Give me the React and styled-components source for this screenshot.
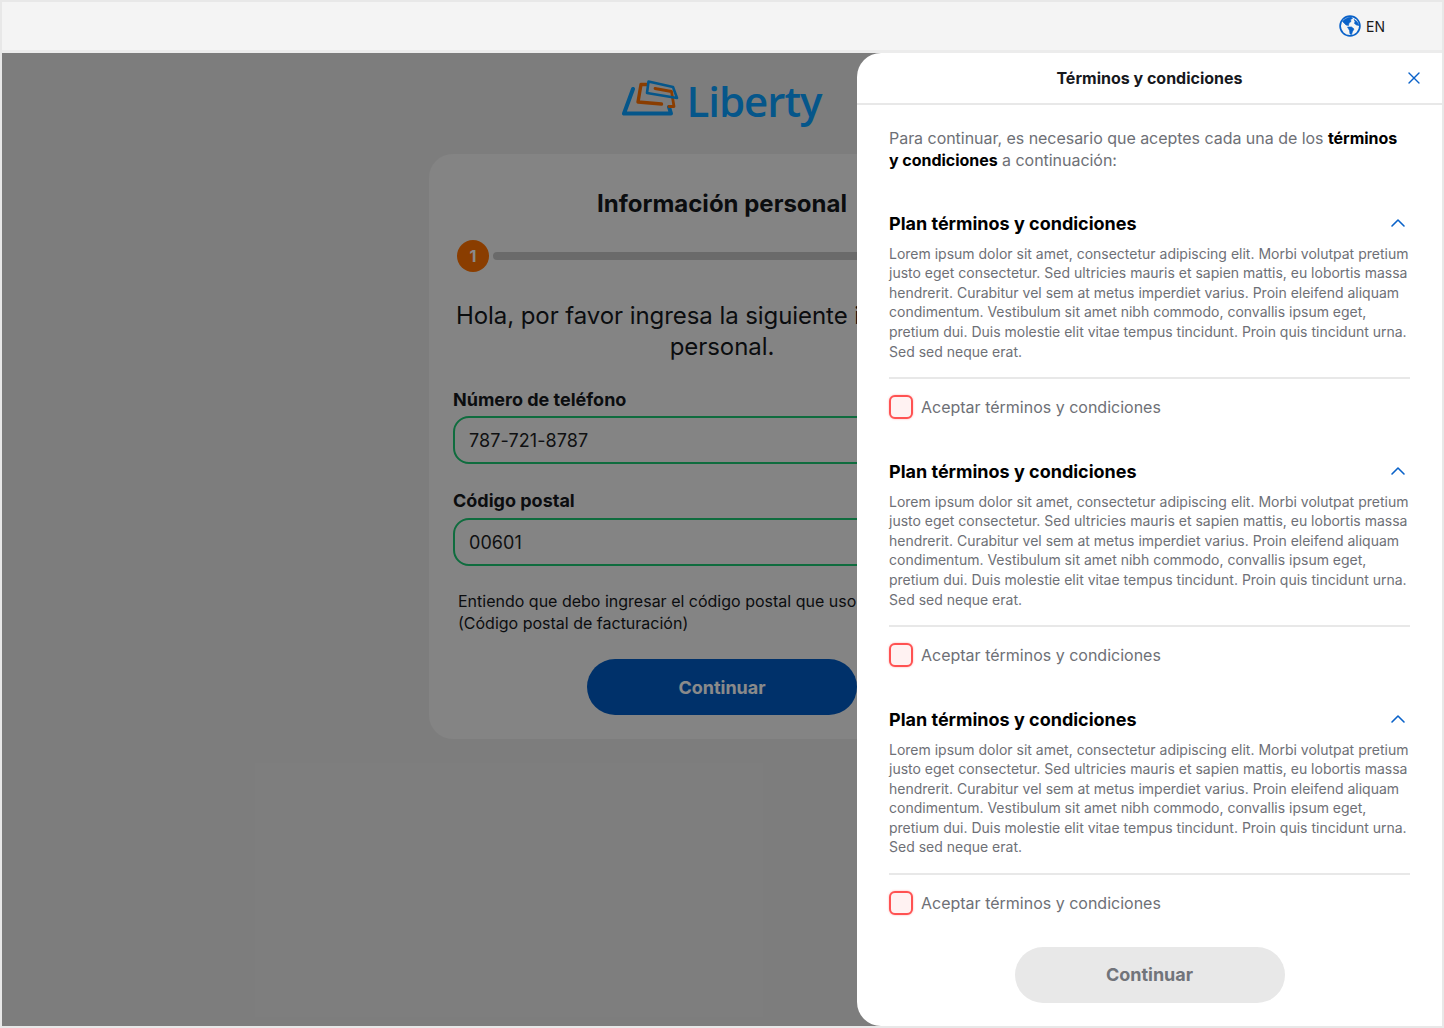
import React from "react";
import styled, { createGlobalStyle } from "styled-components";
import { X, ChevronUp } from "lucide-react";

const Global = createGlobalStyle`
  html, body { margin: 0; padding: 0; background: #e8e8e8; }
  * { box-sizing: border-box; }
  body { font-family: Inter, "Liberation Sans", sans-serif; }
`;

const Frame = styled.div`
  width: 1444px;
  height: 1028px;
  border: 2px solid #e8e8e8;
  display: flex;
  flex-direction: column;
  overflow: hidden;
`;
const TopBar = styled.header`
  height: 51px;
  flex: none;
  background: #f4f4f4;
  border-bottom: 3px solid #ececec;
  display: flex;
  align-items: center;
  justify-content: flex-end;
  gap: 5px;
  padding: 0 57px 0 0;
`;
const LangText = styled.span`
  font-size: 14px;
  color: #1a1a1a;
`;
const Main = styled.main`
  position: relative;
  flex: 1;
  background: #e8e8e8;
  display: flex;
  flex-direction: column;
  align-items: center;
  overflow: hidden;
`;
const LogoRow = styled.div`
  height: 101px;
  display: flex;
  align-items: flex-start;
  gap: 7px;
  padding-top: 27px;
  flex: none;
`;
const LogoWord = styled.span`
  font-family: "Open Sans", Lato, sans-serif;
  font-size: 42px;
  font-weight: 600;
  line-height: 48px;
  letter-spacing: -1px;
  color: #0aa0ff;
  margin-top: -3px;
`;
const Card = styled.section`
  width: 586px;
  height: 585px;
  background: #f4f4f4;
  border-radius: 24px;
  padding: 32px 24px 24px;
  flex: none;
`;
const CardTitle = styled.h1`
  margin: 0;
  font-size: 24px;
  line-height: 36px;
  font-weight: 700;
  color: #16181d;
  text-align: center;
`;
const Progress = styled.div`
  display: flex;
  align-items: center;
  gap: 4px;
  margin: 18px 0 0 4px;
`;
const StepDot = styled.div`
  width: 32px;
  height: 32px;
  border-radius: 50%;
  background: #ff7200;
  color: #fff;
  font-size: 16px;
  font-weight: 700;
  display: flex;
  align-items: center;
  justify-content: center;
`;
const Track = styled.div`
  flex: 1;
  height: 8px;
  border-radius: 4px;
  background: #c4c4c4;
`;
const Lead = styled.p`
  margin: 28px 0 0;
  font-size: 24px;
  line-height: 31px;
  letter-spacing: -0.07px;
  text-align: center;
  color: #16181d;
`;
const FieldLabel = styled.label`
  display: block;
  margin-top: ${(p) => p.$top}px;
  margin-bottom: ${(p) => p.$after}px;
  font-size: 18px;
  line-height: 26px;
  font-weight: 700;
  color: #16181d;
`;
const InputBox = styled.div`
  height: 48px;
  border: 2px solid #1cc873;
  border-radius: 16px;
  background: #f4f4f4;
  display: flex;
  align-items: center;
  padding: 0 14px;
  font-size: 18px;
  letter-spacing: 0.08px;
  color: #1c1e24;
`;
const Note = styled.p`
  margin: 24px 0 0 5px;
  font-size: 16px;
  line-height: 22px;
  color: #16181d;
`;
const PrimaryButton = styled.button`
  display: block;
  width: 270px;
  height: 56px;
  margin: 25px auto 0;
  border: none;
  border-radius: 28px;
  background: ${(p) => (p.$disabled ? "#e8e8e8" : "#005cc4")};
  color: ${(p) => (p.$disabled ? "#71747a" : "#fff")};
  font-family: inherit;
  font-size: 18px;
  font-weight: 700;
  flex: none;
`;
const Overlay = styled.div`
  position: absolute;
  inset: 0;
  background: rgba(0, 0, 0, 0.46);
`;
const Drawer = styled.aside`
  position: absolute;
  top: 0;
  right: 0;
  bottom: 0;
  width: 585px;
  background: #fff;
  border-radius: 24px 0 0 24px;
  display: flex;
  flex-direction: column;
`;
const DrawerHeader = styled.div`
  position: relative;
  height: 52px;
  flex: none;
  border-bottom: 2px solid #e8e8e8;
  display: flex;
  align-items: center;
  justify-content: center;
  font-size: 16px;
  font-weight: 700;
  color: #16181d;
`;
const CloseIcon = styled(X)`
  position: absolute;
  right: 18px;
  top: 15px;
  color: #0a62c9;
`;
const DrawerBody = styled.div`
  flex: 1;
  padding: 22px 32px 0;
  display: flex;
  flex-direction: column;
`;
const Intro = styled.p`
  margin: 0;
  font-size: 16px;
  line-height: 22px;
  letter-spacing: -0.035px;
  color: #6e7076;
  b { color: #000; font-weight: 700; }
`;
const Section = styled.div`
  margin-top: ${(p) => p.$top}px;
`;
const SectionHead = styled.div`
  display: flex;
  align-items: center;
  justify-content: space-between;
  height: 24px;
  h2 { margin: 0; font-size: 18px; line-height: 24px; font-weight: 700; color: #000; }
`;
const Chevron = styled(ChevronUp)`
  color: #0a62c9;
  margin-bottom: 2px;
`;
const Lorem = styled.p`
  margin: 7.6px 0 0;
  font-size: 14px;
  line-height: 19.6px;
  color: #6e7076;
`;
const Rule = styled.hr`
  margin: 15.8px 0 0;
  border: none;
  height: 2px;
  background: #e8e8e8;
`;
const CheckRow = styled.div`
  display: flex;
  align-items: center;
  gap: 8px;
  margin-top: 16px;
  font-size: 16px;
  line-height: 24px;
  color: #6e7076;
`;
const CheckBox = styled.span`
  width: 24px;
  height: 24px;
  border: 2px solid #ff5252;
  border-radius: 6px;
  background: #fff2f2;
  box-shadow: 0 0 2px rgba(255, 82, 82, 0.5);
  flex: none;
`;
const FooterButton = styled(PrimaryButton)`
  margin: 32px auto 0;
`;

const LOREM =
  "Lorem ipsum dolor sit amet, consectetur adipiscing elit. Morbi volutpat pretium justo eget consectetur. Sed ultricies mauris et sapien mattis, eu lobortis massa hendrerit. Curabitur vel sem at metus imperdiet varius. Proin eleifend aliquam condimentum. Vestibulum sit amet nibh commodo, convallis ipsum eget, pretium dui. Duis molestie elit vitae tempus tincidunt. Proin quis tincidunt urna. Sed sed neque erat.";

function GlobeIcon() {
  return (
    <svg width="22" height="22" viewBox="0 0 22 22" fill="#0a62c9" stroke="#0a62c9" strokeWidth="0.6" strokeLinejoin="round">
      <circle cx="11" cy="11" r="9.900" fill="none" strokeWidth="1.700" />
      <path d="M3.500 6.500 C5.500 4 8.500 2.500 12 2 L13.500 3.500 L11.500 4.500 L12 6.500 L10 8 L9.500 10.500 L7 10 L5 8 Z" />
      <path d="M8.500 12 L12.500 12 L15 14 L13.500 16.500 L12.500 19.500 L11 19 L10.500 15.500 Z" />
      <path d="M15 4.500 L18 6.500 L20 10.500 L17.500 10 L15.500 8.500 L16 6.500 Z" />
    </svg>
  );
}

function LogoMark() {
  return (
    <svg width="57" height="38" viewBox="0 0 57 38" fill="none" strokeLinejoin="round" strokeLinecap="round">
      <path d="M11 9 L2 33.500 H49 L47 27" stroke="#0aa0ff" strokeWidth="4" />
      <path d="M25 4.500 H19 L16 22 L39.500 24" stroke="#ff7200" strokeWidth="3.400" />
      <path d="M33 8.500 L49.500 11.500 L52 26.500 H47" stroke="#ff7200" strokeWidth="2.800" />
      <path d="M26.500 1.500 L25 13 L55 18 L51 7 Z" stroke="#0aa0ff" strokeWidth="2.600" />
    </svg>
  );
}

function Terms({ top }) {
  return (
    <Section $top={top}>
      <SectionHead>
        <h2>Plan términos y condiciones</h2>
        <Chevron size={24} strokeWidth={1.6} />
      </SectionHead>
      <Lorem>{LOREM}</Lorem>
      <Rule />
      <CheckRow>
        <CheckBox />
        Aceptar términos y condiciones
      </CheckRow>
    </Section>
  );
}

export default function App() {
  return (
    <Frame>
      <Global />
      <TopBar>
        <GlobeIcon />
        <LangText>EN</LangText>
      </TopBar>
      <Main>
        <LogoRow>
          <LogoMark />
          <LogoWord>Liberty</LogoWord>
        </LogoRow>
        <Card>
          <CardTitle>Información personal</CardTitle>
          <Progress>
            <StepDot>1</StepDot>
            <Track />
          </Progress>
          <Lead>Hola, por favor ingresa la siguiente información personal.</Lead>
          <FieldLabel $top={25} $after={3}>Número de teléfono</FieldLabel>
          <InputBox>787-721-8787</InputBox>
          <FieldLabel $top={24} $after={4}>Código postal</FieldLabel>
          <InputBox>00601</InputBox>
          <Note>
            Entiendo que debo ingresar el código postal que uso para mis
            <br />
            (Código postal de facturación)
          </Note>
          <PrimaryButton>Continuar</PrimaryButton>
        </Card>
        <Overlay />
        <Drawer>
          <DrawerHeader>
            Términos y condiciones
            <CloseIcon size={20} strokeWidth={1.6} />
          </DrawerHeader>
          <DrawerBody>
            <Intro>
              Para continuar, es necesario que aceptes cada una de los <b>términos y condiciones</b> a continuación:
            </Intro>
            <Terms top={41} />
            <Terms top={41} />
            <Terms top={41} />
            <FooterButton $disabled>Continuar</FooterButton>
          </DrawerBody>
        </Drawer>
      </Main>
    </Frame>
  );
}
